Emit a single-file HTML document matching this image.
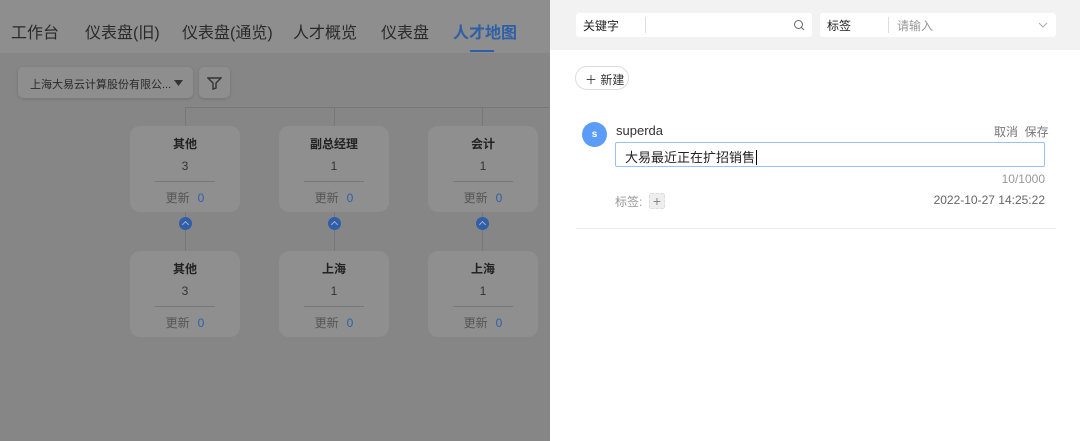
<!DOCTYPE html>
<html><head><meta charset="utf-8"><style>
*{margin:0;padding:0;box-sizing:border-box}
body{width:1080px;height:441px;overflow:hidden;background:#868686;font-family:"Liberation Sans","Noto Sans CJK SC",sans-serif;position:relative}
.a{position:absolute}
.nav{left:0;top:0;width:550px;height:53px;background:#8e8e8e}
.nav span{position:absolute;top:19px;font-size:16px;color:#2a2a2a;white-space:nowrap}
.card{width:110px;height:86px;background:#8f8f8f;border-radius:10px;text-align:center;font-size:12px;color:#222}
.card .t{position:absolute;top:9px;left:0;right:0;font-weight:bold}
.card .n{position:absolute;top:33px;left:0;right:0;color:#333}
.card .l{position:absolute;top:55px;left:25px;width:60px;border-top:1px solid #777}
.card .u{position:absolute;top:63px;left:0;right:0;color:#555}
.card .u b{font-weight:normal;color:#2f5fa6;margin-left:8px}
.vl{width:1px;background:#777}
.dot{width:13px;height:13px;border-radius:50%;background:#2f5fa6}
.dot:after{content:"";position:absolute;left:4px;top:5px;width:4px;height:4px;border-left:1.5px solid #aac;border-top:1.5px solid #aac;transform:rotate(45deg)}
.dr{left:550px;top:0;width:530px;height:441px;background:#fff}
.fb{left:0;top:0;width:530px;height:50px;background:#f2f2f2}
.inp{top:13px;height:24px;background:#fff;border-radius:3px;font-size:12px;color:#222}
.g{color:#999}
</style></head><body>
<div class="a nav">
<span style="left:11px">工作台</span><span style="left:85px">仪表盘(旧)</span><span style="left:182px">仪表盘(通览)</span><span style="left:293px">人才概览</span><span style="left:381px">仪表盘</span><span style="left:453px;color:#2f5fa6;font-weight:bold">人才地图</span>
<div class="a" style="left:470px;top:50px;width:24px;height:2px;background:#2f5fa6"></div>
</div>
<div class="a" style="left:18px;top:67px;width:175px;height:31px;background:#8e8e8e;border-radius:5px;box-shadow:0 1px 3px rgba(0,0,0,.15);font-size:11px;color:#2a2a2a;padding:9px 0 0 12px;white-space:nowrap">上海大易云计算股份有限公...</div>
<svg class="a" style="left:174px;top:80px" width="9" height="6" viewBox="0 0 9 6"><path d="M0 0h9L4.5 6z" fill="#333"/></svg>
<div class="a" style="left:199px;top:67px;width:31px;height:31px;background:#8e8e8e;border-radius:5px;box-shadow:0 1px 3px rgba(0,0,0,.15)">
<svg class="a" style="left:8px;top:9px" width="15" height="14" viewBox="0 0 15 14"><path d="M1 2h13l-5 5v5l-3 1v-6z" fill="none" stroke="#333" stroke-width="1.4"/></svg></div>
<div class="a" style="left:185px;top:107px;width:365px;height:1px;background:#777"></div>
<div class="a vl" style="left:185px;top:107px;height:20px"></div>
<div class="a vl" style="left:334px;top:107px;height:20px"></div>
<div class="a vl" style="left:482px;top:107px;height:20px"></div>
<div class="a vl" style="left:185px;top:212px;height:40px"></div>
<div class="a vl" style="left:334px;top:212px;height:40px"></div>
<div class="a vl" style="left:482px;top:212px;height:40px"></div>
<div class="a dot" style="left:179px;top:217px"></div>
<div class="a dot" style="left:328px;top:217px"></div>
<div class="a dot" style="left:476px;top:217px"></div>
<div class="a card" style="left:130px;top:126px"><div class="t">其他</div><div class="n">3</div><div class="l"></div><div class="u">更新<b>0</b></div></div>
<div class="a card" style="left:279px;top:126px"><div class="t">副总经理</div><div class="n">1</div><div class="l"></div><div class="u">更新<b>0</b></div></div>
<div class="a card" style="left:428px;top:126px"><div class="t">会计</div><div class="n">1</div><div class="l"></div><div class="u">更新<b>0</b></div></div>
<div class="a card" style="left:130px;top:251px"><div class="t">其他</div><div class="n">3</div><div class="l"></div><div class="u">更新<b>0</b></div></div>
<div class="a card" style="left:279px;top:251px"><div class="t">上海</div><div class="n">1</div><div class="l"></div><div class="u">更新<b>0</b></div></div>
<div class="a card" style="left:428px;top:251px"><div class="t">上海</div><div class="n">1</div><div class="l"></div><div class="u">更新<b>0</b></div></div>

<div class="a dr">
<div class="a fb">
<div class="a inp" style="left:26px;width:236px"><span class="a" style="left:7px;top:4px">关键字</span><div class="a" style="left:69px;top:4px;width:1px;height:16px;background:#ddd"></div>
<svg class="a" style="left:217px;top:6px" width="12" height="12" viewBox="0 0 12 12"><circle cx="5.5" cy="5.5" r="4" fill="none" stroke="#666" stroke-width="1"/><path d="M8.5 8.5l2.5 2.5" stroke="#666"/></svg></div>
<div class="a inp" style="left:270px;width:236px"><span class="a" style="left:7px;top:4px">标签</span><div class="a" style="left:68px;top:4px;width:1px;height:16px;background:#ddd"></div><span class="a g" style="left:77px;top:4px">请输入</span>
<svg class="a" style="left:218px;top:9px" width="10" height="6" viewBox="0 0 10 6"><path d="M1 1l4 4 4-4" fill="none" stroke="#aaa"/></svg></div>
</div>
<div class="a" style="left:25px;top:66px;width:54px;height:24px;border:1px solid #ddd;border-radius:12px;font-size:12px;color:#333;padding:4px 0 0 9px;white-space:nowrap">＋ 新建</div>
<div class="a" style="left:32px;top:122px;width:25px;height:25px;border-radius:50%;background:#5b9cf8;color:#fff;font-size:10px;font-weight:bold;text-align:center;line-height:25px">s</div>
<div class="a" style="left:66px;top:123px;font-size:13px;color:#333">superda</div>
<div class="a" style="left:444px;top:123px;font-size:12px;color:#777">取消&nbsp; 保存</div>
<div class="a" style="left:65px;top:142px;width:430px;height:25px;border:1px solid #9cc0f5;border-radius:2px;font-size:13px;color:#222;padding:4px 0 0 9px">大易最近正在扩招销售<span style="border-left:1px solid #000;margin-left:1px"></span></div>
<div class="a g" style="left:440px;top:172px;width:55px;text-align:right;font-size:12px">10/1000</div>
<div class="a g" style="left:65px;top:193px;font-size:12px">标签:</div>
<div class="a" style="left:99px;top:193px;width:16px;height:16px;background:#eee;border:1px dashed #ddd;border-radius:2px;color:#888;font-size:14px;line-height:14px;text-align:center">+</div>
<div class="a" style="left:380px;top:193px;width:115px;text-align:right;font-size:12px;color:#666">2022-10-27 14:25:22</div>
<div class="a" style="left:26px;top:228px;width:480px;height:1px;background:#eee"></div>
</div>
</body></html>
